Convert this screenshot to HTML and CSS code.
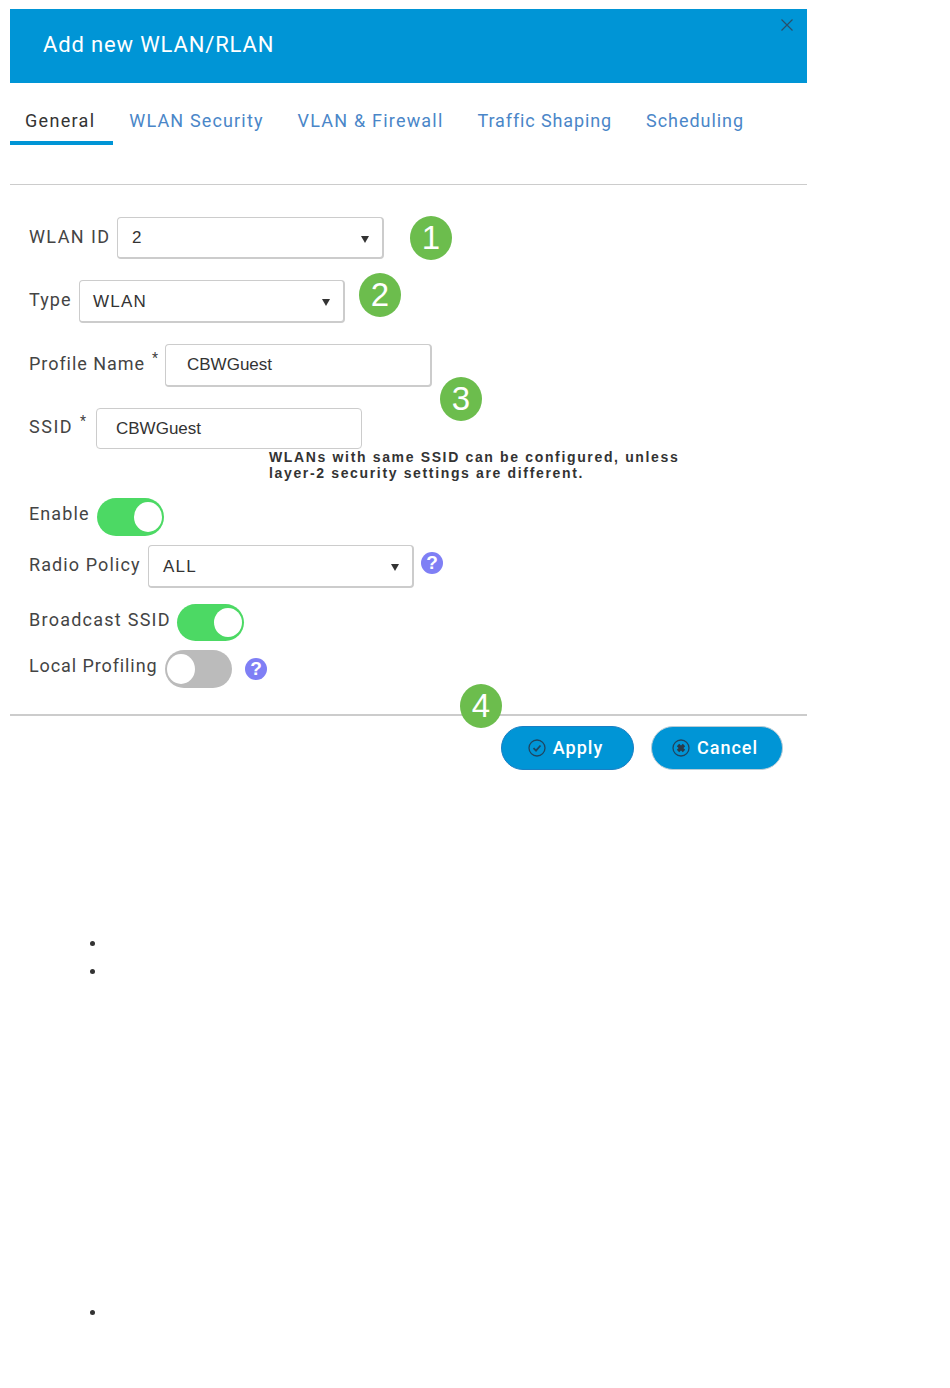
FILE: index.html
```html
<!DOCTYPE html>
<html lang="en">
<head>
    <meta charset="UTF-8">
    <meta name="viewport" content="width=device-width, initial-scale=1.0">
    <title>Add new WLAN/RLAN</title>
    <link rel="stylesheet" href="styles.css">
</head>
<body>
    <div class="dialog">
        <div class="dialog-header">
            <h2>Add new WLAN/RLAN</h2>
            <svg class="close" width="12" height="12" viewBox="0 0 12 12"><path d="M0.5 0.5L11.5 11.5M11.5 0.5L0.5 11.5" stroke="#2a4f6a" stroke-width="1.2" fill="none"/></svg>
        </div>
        <div class="tabs">
            <a class="tab active">General</a>
            <a class="tab">WLAN Security</a>
            <a class="tab tab-vlan">VLAN &amp; Firewall</a>
            <a class="tab tab-traffic">Traffic Shaping</a>
            <a class="tab tab-schedule">Scheduling</a>
        </div>
        <div class="form">
            <div class="row row-id">
                <label>WLAN ID</label>
                <div class="field select"><span>2</span><i class="caret"></i></div>
            </div>
            <div class="row row-type">
                <label>Type</label>
                <div class="field select"><span>WLAN</span><i class="caret"></i></div>
            </div>
            <div class="row row-name">
                <label>Profile Name<sup>*</sup></label>
                <div class="field text"><span>CBWGuest</span></div>
            </div>
            <div class="row row-ssid">
                <label>SSID<sup>*</sup></label>
                <div class="field text"><span>CBWGuest</span></div>
            </div>
            <p class="hint">WLANs with same SSID can be configured, unless<br>layer-2 security settings are different.</p>
            <div class="row row-enable">
                <label>Enable</label>
                <div class="toggle on"><i></i></div>
            </div>
            <div class="row row-radio">
                <label>Radio Policy</label>
                <div class="field select"><span>ALL</span><i class="caret"></i></div>
                <span class="help">?</span>
            </div>
            <div class="row row-broadcast">
                <label>Broadcast SSID</label>
                <div class="toggle on"><i></i></div>
            </div>
            <div class="row row-local">
                <label>Local Profiling</label>
                <div class="toggle"><i></i></div>
                <span class="help">?</span>
            </div>
        </div>
        <div class="dialog-footer">
            <button class="btn btn-apply">
                <svg width="18" height="18" viewBox="0 0 18 18"><circle cx="9" cy="9" r="8" fill="none" stroke="#1f4560" stroke-width="1.3"/><path d="M5.5 9.2L8 11.6L12.5 6.5" fill="none" stroke="#1f4560" stroke-width="1.8"/></svg>
                Apply
            </button>
            <button class="btn btn-cancel">
                <svg width="18" height="18" viewBox="0 0 18 18"><circle cx="9" cy="9" r="8" fill="none" stroke="#1f4560" stroke-width="1.3"/><path d="M6 6L12 12M12 6L6 12" fill="none" stroke="#2b3a48" stroke-width="3.4"/></svg>
                Cancel
            </button>
        </div>
        <span class="badge badge-1">1</span>
        <span class="badge badge-2">2</span>
        <span class="badge badge-3">3</span>
        <span class="badge badge-4">4</span>
    </div>

    <ul class="list-top">
        <li>&nbsp;</li>
        <li>&nbsp;</li>
    </ul>
    <ul class="list-bottom">
        <li>&nbsp;</li>
    </ul>
</body>
</html>
```

FILE: styles.css
```css
body {
    margin: 0;
    padding: 9px 0 0 10px;
    font-family: Roboto, "Liberation Sans", sans-serif;
    color: #333;
    background: #fff;
}
.dialog {
    position: relative;
    width: 797px;
}
.dialog-header {
    position: relative;
    height: 74px;
    background-color: #0095d6;
    display: flex;
    align-items: center;
    padding: 0 0 4px 33px;
    box-sizing: border-box;
}
.dialog-header h2 {
    margin: 0;
    font-size: 22px;
    font-weight: 400;
    letter-spacing: 0.85px;
    color: #fff;
}
.close {
    position: absolute;
    top: 10px;
    right: 14px;
}
.tabs {
    display: flex;
    height: 102px;
    box-sizing: border-box;
    border-bottom: 1px solid #ccc;
    align-items: flex-start;
}
.tab {
    height: 62px;
    line-height: 76px;
    box-sizing: border-box;
    padding: 0 18px 0 16px;
    font-size: 18px;
    letter-spacing: 1.15px;
    color: #4a86c8;
}
.tab.active {
    padding-left: 15px;
    letter-spacing: 1.3px;
    color: #333;
    border-bottom: 4px solid #0095d6;
}
.tab-vlan { letter-spacing: 1.2px; }
.tab-traffic { letter-spacing: 0.88px; }
.tab-schedule { letter-spacing: 0.95px; }
.form {
    padding: 32px 0 0 19px;
}
.row {
    display: flex;
    align-items: center;
    gap: 7px;
}
.row label {
    font-size: 18px;
    letter-spacing: 1.1px;
    color: #444;
    white-space: nowrap;
    position: relative;
    top: -2px;
}
.row sup {
    font-size: 14px;
    margin-left: 7px;
    line-height: 0;
}
.field {
    width: 267px;
    height: 100%;
    box-sizing: border-box;
    border: 1px solid #ccc;
    border-bottom-width: 2px;
    border-right-width: 2px;
    border-radius: 4px;
    display: flex;
    align-items: center;
    justify-content: space-between;
    font-family: "Liberation Sans", Arial, sans-serif;
    font-size: 17px;
    color: #333;
}
.field.select {
    padding: 1px 13px 0 14px;
    letter-spacing: 1.2px;
}
.field.text {
    padding-left: 21px;
}
.caret {
    width: 0;
    height: 0;
    border-left: 4px solid transparent;
    border-right: 4px solid transparent;
    border-top: 7px solid #333;
    margin-top: 2px;
}
.row-id { height: 42px; }
.row-id label { width: 81px; letter-spacing: 1.4px; }
.row-type { height: 43px; margin-top: 21px; }
.row-type label { width: 43px; }
.row-type .field { width: 266px; }
.row-type .field.select { padding-left: 13px; }
.row-name { height: 43px; margin-top: 21px; }
.row-name label { width: 129px; letter-spacing: 0.95px; }
.row-ssid { height: 41px; margin-top: 21px; }
.row-ssid label { width: 60px; letter-spacing: 1.5px; }
.row-ssid .field { width: 266px; border-width: 1px; padding-left: 19px; }
.row-enable { height: 38px; margin-top: 17px; }
.row-enable label { width: 61px; top: -4px; }
.row-radio { height: 43px; margin-top: 9px; }
.row-radio label { width: 112px; }
.row-radio .field { width: 266px; }
.row-broadcast { height: 37px; margin-top: 16px; }
.row-broadcast label { width: 141px; top: -3px; letter-spacing: 1.25px; }
.row-local { height: 38px; margin-top: 9px; }
.row-local label { width: 129px; top: -4px; letter-spacing: 0.9px; }
.hint {
    margin: 0 0 0 240px;
    font-family: "Liberation Sans", Arial, sans-serif;
    font-size: 14px;
    line-height: 16px;
    font-weight: 700;
    letter-spacing: 1.65px;
    color: #333;
}
.toggle {
    width: 67px;
    height: 100%;
    box-sizing: border-box;
    border-radius: 19px;
    padding: 4px 2px;
    display: flex;
    background-color: #bbb;
}
.toggle i {
    width: 28px;
    border-radius: 50%;
    background: #fff;
}
.toggle.on {
    background-color: #4cd964;
    justify-content: flex-end;
}
.help {
    width: 22px;
    height: 22px;
    border-radius: 50%;
    background-color: #7f7ff5;
    color: #fff;
    font-family: "Liberation Sans", Arial, sans-serif;
    font-size: 19px;
    font-weight: 700;
    line-height: 22px;
    text-align: center;
}
.row-radio .help { margin: -8px 0 0 0; }
.row-local .help { margin-left: 6px; }
.dialog-footer {
    margin-top: 26px;
    border-top: 2px solid #ccc;
    display: flex;
    justify-content: flex-end;
    gap: 17px;
    padding: 10px 24px 0 0;
}
.btn {
    height: 44px;
    display: flex;
    align-items: center;
    justify-content: center;
    gap: 7px;
    box-sizing: border-box;
    padding: 0 4px 2px 0;
    border: 1px solid #1a7fc4;
    border-radius: 22px;
    background-color: #0095d6;
    color: #fff;
    font-family: Roboto, "Liberation Sans", sans-serif;
    font-size: 18px;
    font-weight: 500;
    letter-spacing: 1px;
}
.btn svg {
    margin-top: 2px;
}
.btn-apply { width: 133px; }
.btn-cancel {
    width: 132px;
    border-color: #b9ccd6;
}
.badge {
    position: absolute;
    width: 42px;
    height: 44px;
    border-radius: 50%;
    background-color: #6cbd4d;
    color: #fff;
    font-family: "Liberation Sans", Arial, sans-serif;
    font-size: 33px;
    line-height: 44px;
    text-align: center;
}
.badge-1 { left: 400px; top: 207px; }
.badge-2 { left: 349px; top: 264px; }
.badge-3 { left: 430px; top: 368px; }
.badge-4 { left: 450px; top: 675px; }
ul {
    margin: 0;
    padding-left: 97px;
    font-size: 16px;
    line-height: 28px;
}
.list-top { margin-top: 160px; }
.list-bottom { margin-top: 313px; }
```
